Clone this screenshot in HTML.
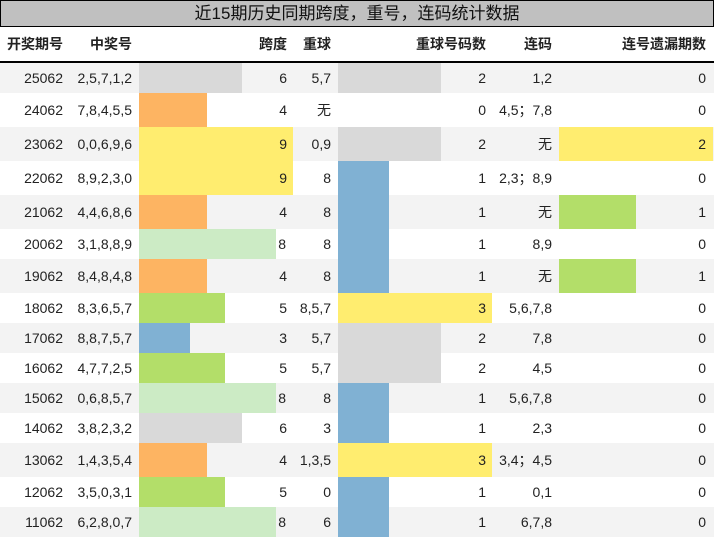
<!DOCTYPE html>
<html><head><meta charset="utf-8"><style>
*{margin:0;padding:0;box-sizing:border-box}
body{width:714px;height:538px;background:#fff;font-family:"Liberation Sans","Noto Sans CJK SC",sans-serif;color:#222;overflow:hidden;position:relative}
.title{position:absolute;left:0;top:0;width:714px;height:27px;background:#c0c0c0;border:1px solid #000;font-size:17px;text-align:center;line-height:25px;color:#111}
.hd{position:absolute;left:0;top:27px;width:714px;height:36px;border-bottom:2px solid #000;font-weight:bold;font-size:14px}
.r{position:absolute;left:0;width:714px;font-size:14px}
.r.o{background:#f3f3f3}
.r>div,.hd>div{position:absolute;top:0;height:100%;display:flex;align-items:center;justify-content:flex-end;white-space:nowrap}
.b{justify-content:flex-start!important}
.c1{left:0;width:63px}.c2{left:70px;width:62px}.c3{left:200px;width:87px}.c4{left:293px;width:38px}
.c5{left:400px;width:86px}.c6{left:492px;width:60px}.c7{left:600px;width:106px}
.g{background:#d9d9d9}.or{background:#fdb462}.y{background:#ffed6f}.lg{background:#ccebc5}.gr{background:#b3de69}.bl{background:#80b1d3}
</style></head><body>
<div class="title">近15期历史同期跨度，重号，连码统计数据</div>
<div class="hd"><div class="c1">开奖期号</div><div class="c2">中奖号</div><div class="c3">跨度</div><div class="c4">重球</div><div class="c5">重球号码数</div><div class="c6">连码</div><div class="c7">连号遗漏期数</div></div>

<div class="r o" style="top:63px;height:30px"><div class="g" style="left:139px;width:103px"></div><div class="g" style="left:338px;width:103px"></div><div class="c1">25062</div><div class="c2">2,5,7,1,2</div><div class="c3">6</div><div class="c4">5,7</div><div class="c5">2</div><div class="c6">1,2</div><div class="c7">0</div></div>
<div class="r" style="top:93px;height:34px"><div class="or" style="left:139px;width:68px"></div><div class="c1">24062</div><div class="c2">7,8,4,5,5</div><div class="c3">4</div><div class="c4">无</div><div class="c5">0</div><div class="c6">4,5；7,8</div><div class="c7">0</div></div>
<div class="r o" style="top:127px;height:34px"><div class="y" style="left:139px;width:154px"></div><div class="g" style="left:338px;width:103px"></div><div class="y" style="left:559px;width:154px"></div><div class="c1">23062</div><div class="c2">0,0,6,9,6</div><div class="c3">9</div><div class="c4">0,9</div><div class="c5">2</div><div class="c6">无</div><div class="c7">2</div></div>
<div class="r" style="top:161px;height:34px"><div class="y" style="left:139px;width:154px"></div><div class="bl" style="left:338px;width:51px"></div><div class="c1">22062</div><div class="c2">8,9,2,3,0</div><div class="c3">9</div><div class="c4">8</div><div class="c5">1</div><div class="c6">2,3；8,9</div><div class="c7">0</div></div>
<div class="r o" style="top:195px;height:34px"><div class="or" style="left:139px;width:68px"></div><div class="bl" style="left:338px;width:51px"></div><div class="gr" style="left:559px;width:77px"></div><div class="c1">21062</div><div class="c2">4,4,6,8,6</div><div class="c3">4</div><div class="c4">8</div><div class="c5">1</div><div class="c6">无</div><div class="c7">1</div></div>
<div class="r" style="top:229px;height:30px"><div class="lg" style="left:139px;width:137px"></div><div class="bl" style="left:338px;width:51px"></div><div class="c1">20062</div><div class="c2">3,1,8,8,9</div><div class="c3" style="left:150px;width:136px;justify-content:flex-end">8</div><div class="c4">8</div><div class="c5">1</div><div class="c6">8,9</div><div class="c7">0</div></div>
<div class="r o" style="top:259px;height:34px"><div class="or" style="left:139px;width:68px"></div><div class="bl" style="left:338px;width:51px"></div><div class="gr" style="left:559px;width:77px"></div><div class="c1">19062</div><div class="c2">8,4,8,4,8</div><div class="c3">4</div><div class="c4">8</div><div class="c5">1</div><div class="c6">无</div><div class="c7">1</div></div>
<div class="r" style="top:293px;height:30px"><div class="gr" style="left:139px;width:86px"></div><div class="y" style="left:338px;width:154px"></div><div class="c1">18062</div><div class="c2">8,3,6,5,7</div><div class="c3">5</div><div class="c4">8,5,7</div><div class="c5">3</div><div class="c6">5,6,7,8</div><div class="c7">0</div></div>
<div class="r o" style="top:323px;height:30px"><div class="bl" style="left:139px;width:51px"></div><div class="g" style="left:338px;width:103px"></div><div class="c1">17062</div><div class="c2">8,8,7,5,7</div><div class="c3">3</div><div class="c4">5,7</div><div class="c5">2</div><div class="c6">7,8</div><div class="c7">0</div></div>
<div class="r" style="top:353px;height:30px"><div class="gr" style="left:139px;width:86px"></div><div class="g" style="left:338px;width:103px"></div><div class="c1">16062</div><div class="c2">4,7,7,2,5</div><div class="c3">5</div><div class="c4">5,7</div><div class="c5">2</div><div class="c6">4,5</div><div class="c7">0</div></div>
<div class="r o" style="top:383px;height:30px"><div class="lg" style="left:139px;width:137px"></div><div class="bl" style="left:338px;width:51px"></div><div class="c1">15062</div><div class="c2">0,6,8,5,7</div><div class="c3" style="left:150px;width:136px">8</div><div class="c4">8</div><div class="c5">1</div><div class="c6">5,6,7,8</div><div class="c7">0</div></div>
<div class="r" style="top:413px;height:30px"><div class="g" style="left:139px;width:103px"></div><div class="bl" style="left:338px;width:51px"></div><div class="c1">14062</div><div class="c2">3,8,2,3,2</div><div class="c3">6</div><div class="c4">3</div><div class="c5">1</div><div class="c6">2,3</div><div class="c7">0</div></div>
<div class="r o" style="top:443px;height:34px"><div class="or" style="left:139px;width:68px"></div><div class="y" style="left:338px;width:154px"></div><div class="c1">13062</div><div class="c2">1,4,3,5,4</div><div class="c3">4</div><div class="c4">1,3,5</div><div class="c5">3</div><div class="c6">3,4；4,5</div><div class="c7">0</div></div>
<div class="r" style="top:477px;height:30px"><div class="gr" style="left:139px;width:86px"></div><div class="bl" style="left:338px;width:51px"></div><div class="c1">12062</div><div class="c2">3,5,0,3,1</div><div class="c3">5</div><div class="c4">0</div><div class="c5">1</div><div class="c6">0,1</div><div class="c7">0</div></div>
<div class="r o" style="top:507px;height:30px"><div class="lg" style="left:139px;width:137px"></div><div class="bl" style="left:338px;width:51px"></div><div class="c1">11062</div><div class="c2">6,2,8,0,7</div><div class="c3" style="left:150px;width:136px">8</div><div class="c4">6</div><div class="c5">1</div><div class="c6">6,7,8</div><div class="c7">0</div></div>
</body></html>
